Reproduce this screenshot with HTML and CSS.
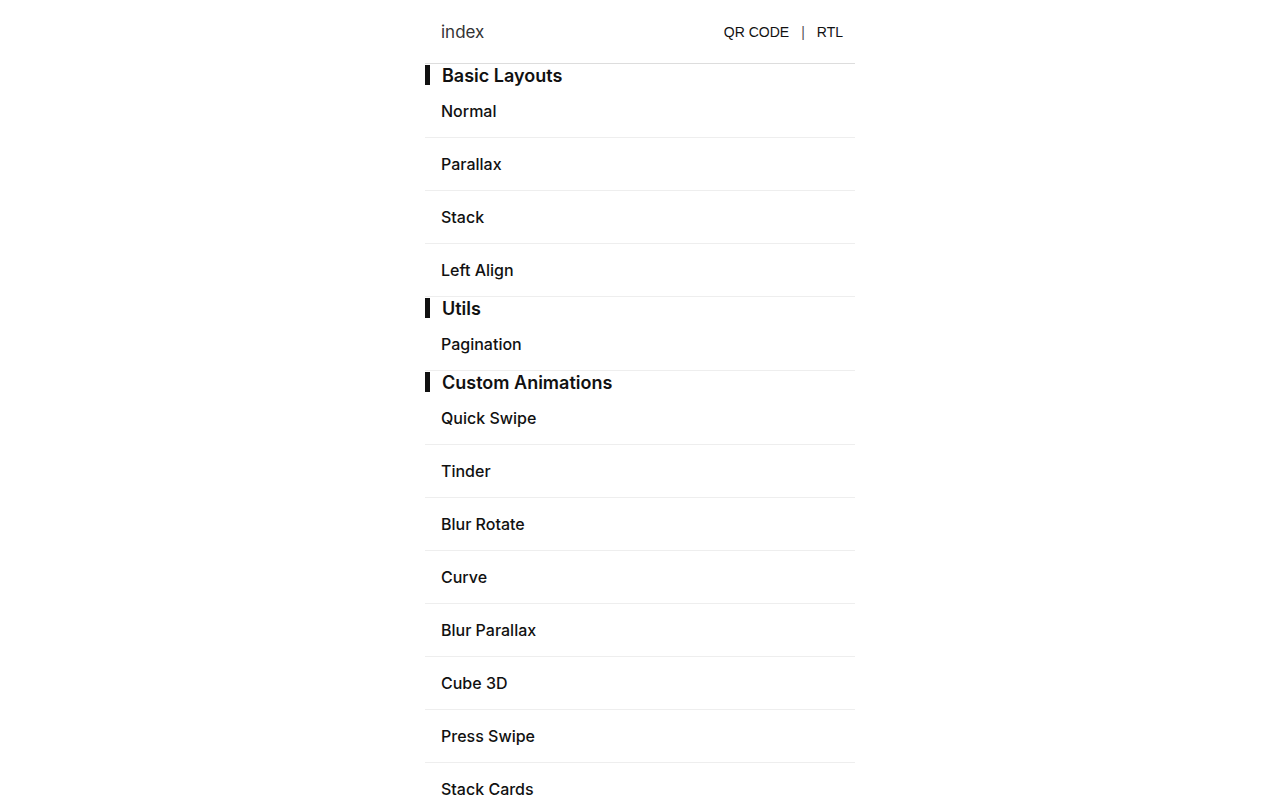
FILE: index.html
```html
<!DOCTYPE html>
<html>
<head>
<meta charset="utf-8">
<link rel="stylesheet" href="styles.css">
</head>
<body>
<div class="page">
  <header class="header">
    <span class="title">index</span>
    <nav class="links"><span>QR CODE</span><span class="sep">|</span><span>RTL</span></nav>
  </header>
  <section>
    <h2 class="group"><span>Basic Layouts</span></h2>
    <ul class="list">
      <li>Normal</li>
      <li>Parallax</li>
      <li>Stack</li>
      <li>Left Align</li>
    </ul>
  </section>
  <section>
    <h2 class="group"><span>Utils</span></h2>
    <ul class="list">
      <li>Pagination</li>
    </ul>
  </section>
  <section>
    <h2 class="group"><span>Custom Animations</span></h2>
    <ul class="list">
      <li>Quick Swipe</li>
      <li>Tinder</li>
      <li>Blur Rotate</li>
      <li>Curve</li>
      <li>Blur Parallax</li>
      <li>Cube 3D</li>
      <li>Press Swipe</li>
      <li>Stack Cards</li>
    </ul>
  </section>
</div>
</body>
</html>
```

FILE: styles.css
```css
html, body { margin: 0; padding: 0; background: #fff; }
body { font-family: Inter, "Noto Sans", sans-serif; color: #111; }
.page { width: 430px; margin: 0 auto; }
.header {
  height: 63px;
  border-bottom: 1px solid #ddd;
  display: flex;
  align-items: center;
  justify-content: space-between;
  padding: 0 12px 0 16px;
}
.title { font-size: 17px; color: #333; }
.links { display: flex; gap: 12px; font-family: "Liberation Sans", Arial, sans-serif; font-size: 14px; color: #111; }
.links .sep { color: #555; }
.group {
  margin: 0;
  padding-top: 1px;
  height: 20px;
  display: flex;
}
.group span {
  border-left: 5px solid #111;
  padding-left: 12px;
  height: 20px;
  font-size: 18px;
  line-height: 22px;
  font-weight: 600;
  color: #111;
}
.list { list-style: none; margin: 0; padding: 0; }
.list li {
  height: 52px;
  line-height: 52px;
  padding-left: 16px;
  border-bottom: 1px solid #eee;
  font-size: 16px;
  font-weight: 500;
  color: #111;
}
```
